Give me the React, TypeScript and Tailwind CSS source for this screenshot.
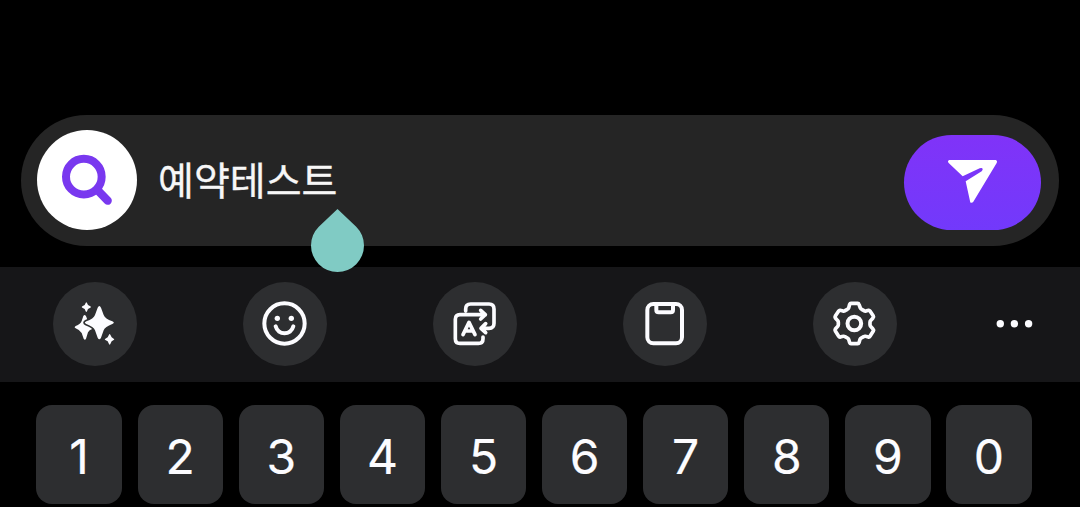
import type { ReactNode } from "react";

const digits = ["1", "2", "3", "4", "5", "6", "7", "8", "9", "0"];

function ToolButton({ label, children }: { label: string; children: ReactNode }) {
  return (
    <button aria-label={label} className="size-[84px] shrink-0 rounded-full bg-[#2d2e30]">
      <svg
        viewBox="24 24 252 252"
        className="size-full"
        fill="none"
        stroke="#fcfcff"
        strokeWidth="12"
        strokeLinecap="round"
        strokeLinejoin="round"
      >
        {children}
      </svg>
    </button>
  );
}

function SearchBar() {
  return (
    <div className="mx-[21px] flex h-[131px] items-start rounded-full bg-[#252525] pr-[18px] pl-4">
      <div className="mt-[15px] size-[100px] shrink-0 rounded-full bg-white">
        <svg viewBox="81 75 300 300" className="size-full" fill="none" stroke="#7938ef" strokeLinecap="round">
          <circle cx="221.500" cy="215" r="53.500" strokeWidth="24" />
          <path d="M264 257L293 287" strokeWidth="25" />
        </svg>
      </div>
      <div className="relative mt-[35px] ml-[21px] font-['Noto_Sans_CJK_KR',sans-serif] text-[39px] leading-[56px] whitespace-nowrap text-[#f7f7f7] [-webkit-text-stroke:0.3px_#f7f7f7]">
        예약테스트
        <svg
          viewBox="0 0 53 63"
          className="absolute top-[59px] left-[153px] h-[63px] w-[53px]"
          fill="#80cbc4"
        >
          <path d="M26.500 0L45.200 17.700A26.500 26.500 0 1 1 7.800 17.700Z" />
        </svg>
      </div>
      <button
        aria-label="Send"
        className="mt-5 ml-auto h-[95px] w-[137px] rounded-full bg-linear-to-b from-[#8033f8] to-[#7239fb]"
      >
        <svg viewBox="42 90 411 285" className="size-full" fill="#fff">
          <path d="M178 165H317Q323 167 320 174L250 290Q247 294 242 293Q240 292 240 288L227 229L275 199Q280 194 277 190Q274 188 269 190L218 214L176 174Q171 168 178 165Z" />
        </svg>
      </button>
    </div>
  );
}

function Toolbar() {
  return (
    <div className="mt-[21px] flex h-[115px] items-start bg-[#161618] pt-[15px] pl-[53px]">
      <div className="flex gap-[106px]">
        <ToolButton label="AI">
          <g fill="#fcfcff" stroke="none">
            <path d="M119 123Q123 123 125 131Q129 149 138 154L144 160Q146 162 143 164Q132 168 129 175L123 194Q120 200 116 194L110 177Q106 169 92 163Q86 160 92 156Q107 150 110 141L115 126Q117 123 119 123Z" />
            <path
              d="M158 101Q163 91 168 101L176 123Q180 134 202 142Q211 146 202 150Q180 158 176 169L168 191Q163 201 158 191L150 169Q146 158 124 150Q115 146 124 142Q146 134 150 123Z"
              stroke="#2d2e30"
              strokeWidth="10"
              paintOrder="stroke"
            />
            <path d="M122 87Q124 83 126 87L129 93L136 97Q140 99 136 101L129 105L126 112Q124 116 122 112L119 105L112 101Q108 99 112 97L119 93Z" />
            <path d="M192 182Q194 178 196 182L200 190L206 194Q210 196 206 198L200 202L196 210Q194 214 192 210L188 202L181 198Q177 196 181 194L188 190Z" />
          </g>
        </ToolButton>
        <ToolButton label="Emoji">
          <circle cx="148.500" cy="148.500" r="60.500" />
          <path d="M122 157C129 185 168 185 175 157" />
          <circle cx="127" cy="133" r="8" fill="#fcfcff" stroke="none" />
          <circle cx="169" cy="133" r="8" fill="#fcfcff" stroke="none" />
        </ToolButton>
        <ToolButton label="Translate">
          <path
            d="M122 111V105Q122 90 137 90H192Q207 90 207 105V148Q207 163 192 163H171M182 149L168 163L182 176M174 189V194Q174 208 160 208H105Q91 208 91 194V136Q91 122 105 122H181M167 109L181 122L167 135"
            strokeWidth="11"
          />
          <path d="M114 182L132 145L150 182M121 171H143" strokeWidth="11" />
        </ToolButton>
        <ToolButton label="Clipboard">
          <rect x="97" y="90" width="104" height="118" rx="18" />
          <path d="M124 91V108Q124 115 131 115H167Q174 115 174 108V91" />
        </ToolButton>
        <ToolButton label="Settings">
          <path
            d="M138 88H158Q161 88 162 91L166 102Q167 105 170 106L177 110Q180 112 183 111L190 109Q193 108 195 111L205 126Q207 129 204 132L197 140Q195 142 195 145V152Q195 155 197 157L204 165Q207 168 205 171L195 187Q193 190 190 189L182 187Q179 186 176 188L169 192Q166 193 165 196L162 206Q161 209 158 209H138Q135 209 134 206L131 196Q130 193 127 192L120 188Q117 186 114 187L106 189Q103 190 101 187L91 171Q89 168 91 165L98 157Q100 155 100 152V145Q100 142 98 140L91 132Q89 129 91 126L101 111Q103 108 106 109L114 111Q117 112 120 110L127 106Q130 105 131 102L134 91Q135 88 138 88Z"
            strokeWidth="11"
          />
          <circle cx="148" cy="148.500" r="20.500" strokeWidth="12" />
        </ToolButton>
      </div>
      <button aria-label="More" className="mt-[38px] ml-[99px]">
        <svg viewBox="0 0 37 8" className="block h-2 w-[37px]" fill="#fcfcff">
          <circle cx="4.300" cy="3.700" r="3.700" />
          <circle cx="18.400" cy="3.700" r="3.700" />
          <circle cx="32.600" cy="3.700" r="3.700" />
        </svg>
      </button>
    </div>
  );
}

function NumberRow() {
  return (
    <div className="mt-[23px] mr-[48.400px] ml-[36.450px] grid h-[99px] grid-cols-10 gap-[15.700px] font-['Inter',sans-serif] text-[48px] leading-none text-[#fcfcff]">
      {digits.map((digit) => (
        <button key={digit} className="flex items-center justify-center rounded-[16px] bg-[#2d2e30] pt-[4px] [-webkit-text-stroke:0.2px_#fcfcff]">
          {digit}
        </button>
      ))}
    </div>
  );
}

export default function App() {
  return (
    <main className="h-[507px] w-[1080px] overflow-hidden bg-black pt-[115px]">
      <SearchBar />
      <Toolbar />
      <NumberRow />
    </main>
  );
}
